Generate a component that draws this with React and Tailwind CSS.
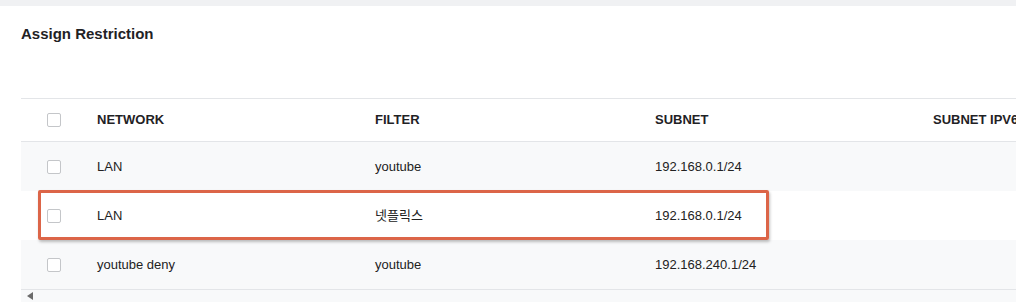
import React from "react";

const rows = [
  { network: "LAN", filter: "youtube", subnet: "192.168.0.1/24", bg: "bg-[#f8f9fa]" },
  { network: "LAN", filter: "넷플릭스", subnet: "192.168.0.1/24", bg: "bg-white" },
  { network: "youtube deny", filter: "youtube", subnet: "192.168.240.1/24", bg: "bg-[#f8f9fa]" },
];

function Box() {
  return <div className="w-[14px] h-[14px] rounded-[2px] border border-[#c4c6c9] bg-white" />;
}

export default function App() {
  return (
    <div
      className="w-[1016px] h-[302px] bg-white overflow-hidden text-[#222]"
      style={{ fontFamily: '"Liberation Sans", Arial, "Noto Sans CJK KR", sans-serif' }}
    >
      <div className="h-[6px] bg-[#f0f1f3]" />
      <div className="pl-[21px] pt-[19px] h-[92px]">
        <h2 className="text-[15px] font-bold text-[#1f2225] leading-[17px]">Assign Restriction</h2>
      </div>
      <div className="relative ml-[21px] w-[1200px]">
        <div className="flex items-center h-[44px] border-t border-b border-[#e3e5e8] bg-white text-[13px] font-bold text-[#1f2225]">
          <div className="w-[76px] pl-[26px] flex items-center"><Box /></div>
          <div className="w-[278px]">NETWORK</div>
          <div className="w-[280px]">FILTER</div>
          <div className="w-[278px]">SUBNET</div>
          <div className="w-[278px]">SUBNET IPV6</div>
        </div>
        {rows.map((r, i) => (
          <div key={i} className={`flex items-center h-[49px] ${r.bg} text-[13px] text-[#222]`}>
            <div className="w-[76px] pl-[26px] flex items-center"><Box /></div>
            <div className="w-[278px]">{r.network}</div>
            <div className="w-[280px]">{r.filter}</div>
            <div className="w-[278px]">{r.subnet}</div>
            <div className="w-[278px]"></div>
          </div>
        ))}
        <div className="border-t border-[#e3e5e8] h-[13px] bg-[#f8f9fa] flex items-center pl-[6px]">
          <svg width="6" height="8" viewBox="0 0 6 8"><path d="M6 0 L0 4 L6 8 Z" fill="#6b6b6b" /></svg>
        </div>
        <div className="absolute left-[17px] top-[92px] w-[731px] h-[50px] border-[3px] border-[#dc6548] rounded-[2px] shadow-[1px_2px_3px_rgba(0,0,0,0.25)]" />
      </div>
    </div>
  );
}
